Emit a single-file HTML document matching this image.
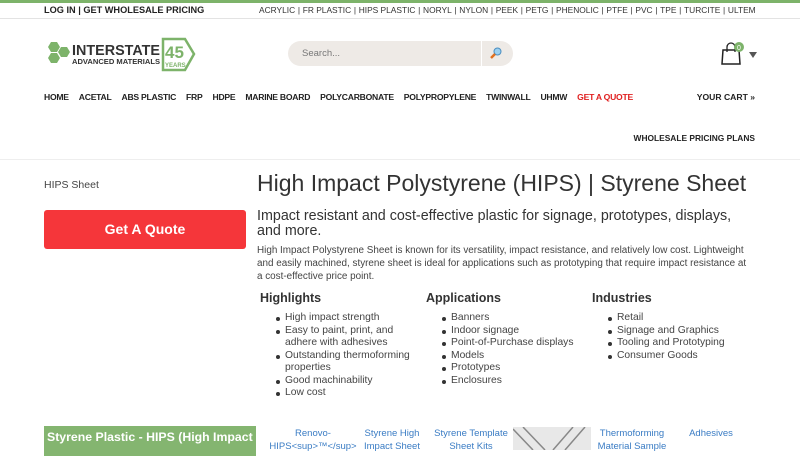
<!DOCTYPE html>
<html><head><meta charset="utf-8"><style>
*{margin:0;padding:0;box-sizing:border-box}
body{width:800px;height:450px;overflow:hidden;background:#fff;font-family:"Liberation Sans","DejaVu Sans",sans-serif;color:#333;position:relative}
.a{position:absolute;white-space:nowrap}
.top{position:absolute;left:0;top:0;width:800px;height:19px;border-top:3px solid #7db36a;border-bottom:1px solid #e3e3e3}
.nav span{margin-right:10px}
ul{list-style:none}
li{position:relative;padding-left:9px;font-size:10.3px;line-height:12.5px;color:#444}
li:before{content:"";position:absolute;left:0;top:5px;width:4px;height:4px;border-radius:50%;background:#333}
h3{font-size:12.5px;font-weight:bold;color:#333;margin-bottom:7px}
.col{position:absolute;top:291px;width:160px}
.col ul{margin-left:16px}
.lnk{position:absolute;top:428px;font-size:9.5px;color:#3a7cc4;text-align:center;line-height:12.5px}
</style></head><body>
<div class="top"></div>
<div class="a" style="left:44px;top:5px;font-size:9.2px;font-weight:bold;color:#222">LOG IN | GET WHOLESALE PRICING</div>
<div class="a" style="left:259px;top:5px;width:497px;font-size:8.4px;color:#333;display:flex;justify-content:space-between"><span>ACRYLIC</span><span>|</span><span>FR PLASTIC</span><span>|</span><span>HIPS PLASTIC</span><span>|</span><span>NORYL</span><span>|</span><span>NYLON</span><span>|</span><span>PEEK</span><span>|</span><span>PETG</span><span>|</span><span>PHENOLIC</span><span>|</span><span>PTFE</span><span>|</span><span>PVC</span><span>|</span><span>TPE</span><span>|</span><span>TURCITE</span><span>|</span><span>ULTEM</span></div>
<svg class="a" style="left:45px;top:37px" width="152" height="36" viewBox="0 0 152 36">
<polygon points="6,5 12,5 15,10 12,15 6,15 3,10" fill="#7db36a"/>
<polygon points="16,10 22,10 25,15 22,20 16,20 13,15" fill="#7db36a"/>
<polygon points="6,16 12,16 15,21 12,26 6,26 3,21" fill="#7db36a"/>
<polygon points="118,2 140,2 149,17 140,33 118,33" fill="none" stroke="#7db36a" stroke-width="2.5"/>
<text x="27" y="18" font-family="Liberation Sans" font-weight="bold" font-size="15" fill="#333" textLength="88" lengthAdjust="spacingAndGlyphs">INTERSTATE</text>
<text x="27" y="27" font-family="Liberation Sans" font-weight="bold" font-size="7.5" fill="#333" textLength="88" lengthAdjust="spacingAndGlyphs">ADVANCED MATERIALS</text>
<text x="120" y="21" font-family="Liberation Sans" font-weight="bold" font-size="17" fill="#7db36a">45</text>
<text x="120" y="30" font-family="Liberation Sans" font-weight="bold" font-size="6" fill="#7db36a">YEARS</text>
</svg>
<div class="a" style="left:288px;top:41px;width:193px;height:25px;background:#eeeae6;border-radius:13px 0 0 13px;font-size:9.5px;color:#777;padding:7px 14px">Search...</div>
<div class="a" style="left:482px;top:41px;width:31px;height:25px;background:#eeeae6;border-radius:0 13px 13px 0"></div>
<svg class="a" style="left:489px;top:46px" width="14" height="14"><circle cx="8.5" cy="5.5" r="3.5" fill="#9cd0f0" stroke="#4a8ec0"/><line x1="6" y1="8" x2="2" y2="12" stroke="#e07020" stroke-width="2.5"/></svg>
<svg class="a" style="left:721px;top:42px" width="40" height="24"><path d="M2,8 H18 L19,22 H1 Z" fill="none" stroke="#222" stroke-width="1.5"/><path d="M6,10 V5 A4,4 0 0 1 14,5 V10" fill="none" stroke="#222" stroke-width="1.3"/><circle cx="18" cy="5" r="5" fill="#7db36a"/><text x="16" y="8" font-size="7" fill="#fff" font-family="Liberation Sans">0</text><polygon points="28,10 36,10 32,16" fill="#555"/></svg>
<div class="a nav" style="left:44px;top:92px;font-size:8.6px;font-weight:bold;color:#222;letter-spacing:-0.25px"><span>HOME</span><span>ACETAL</span><span>ABS PLASTIC</span><span>FRP</span><span>HDPE</span><span>MARINE BOARD</span><span>POLYCARBONATE</span><span>POLYPROPYLENE</span><span>TWINWALL</span><span>UHMW</span><span style="color:#e02020">GET A QUOTE</span></div>
<div class="a" style="right:45px;top:92px;font-size:8.6px;font-weight:bold;color:#222">YOUR CART »</div>
<div class="a" style="right:45px;top:133px;font-size:8.4px;font-weight:bold;color:#222">WHOLESALE PRICING PLANS</div>
<div class="a" style="left:0;top:159px;width:800px;height:1px;background:#eee"></div>
<div class="a" style="left:44px;top:179px;font-size:10.5px;color:#444">HIPS Sheet</div>
<div class="a" style="left:44px;top:210px;width:202px;height:39px;background:#f5363a;border-radius:3px;color:#fff;font-size:14px;font-weight:bold;text-align:center;line-height:39px">Get A Quote</div>
<div class="a" style="left:257px;top:170px;font-size:23px;color:#333">High Impact Polystyrene (HIPS) | Styrene Sheet</div>
<div class="a" style="left:257px;top:209px;width:500px;white-space:normal;font-size:14.3px;line-height:15px;color:#333">Impact resistant and cost-effective plastic for signage, prototypes, displays, and more.</div>
<div class="a" style="left:257px;top:245px;width:495px;white-space:normal;font-size:9.9px;line-height:12.8px;color:#444">High Impact Polystyrene Sheet is known for its versatility, impact resistance, and relatively low cost. Lightweight and easily machined, styrene sheet is ideal for applications such as prototyping that require impact resistance at a cost-effective price point.</div>
<div class="col" style="left:260px"><h3>Highlights</h3><ul><li>High impact strength</li><li>Easy to paint, print, and adhere with adhesives</li><li>Outstanding thermoforming properties</li><li>Good machinability</li><li>Low cost</li></ul></div>
<div class="col" style="left:426px"><h3>Applications</h3><ul><li>Banners</li><li>Indoor signage</li><li>Point-of-Purchase displays</li><li>Models</li><li>Prototypes</li><li>Enclosures</li></ul></div>
<div class="col" style="left:592px"><h3>Industries</h3><ul><li>Retail</li><li>Signage and Graphics</li><li>Tooling and Prototyping</li><li>Consumer Goods</li></ul></div>
<div class="a" style="left:44px;top:426px;width:212px;height:30px;background:#84b570;color:#fff;font-size:12.3px;font-weight:bold;padding:4px 3px;overflow:hidden">Styrene Plastic - HIPS (High Impact</div>
<div class="lnk" style="left:268px;width:90px">Renovo-<br>HIPS&lt;sup&gt;™&lt;/sup&gt;</div>
<div class="lnk" style="left:358px;width:68px">Styrene High<br>Impact Sheet</div>
<div class="lnk" style="left:430px;width:82px">Styrene Template<br>Sheet Kits</div>
<svg class="a" style="left:513px;top:427px" width="78" height="23"><rect width="78" height="23" fill="#e8e8e8"/><path d="M0,2 L20,23 M10,0 L32,23 M60,0 L40,23 M72,0 L52,23" stroke="#888" stroke-width="1.5"/></svg>
<div class="lnk" style="left:592px;width:80px">Thermoforming<br>Material Sample</div>
<div class="lnk" style="left:680px;width:62px">Adhesives</div>
</body></html>
